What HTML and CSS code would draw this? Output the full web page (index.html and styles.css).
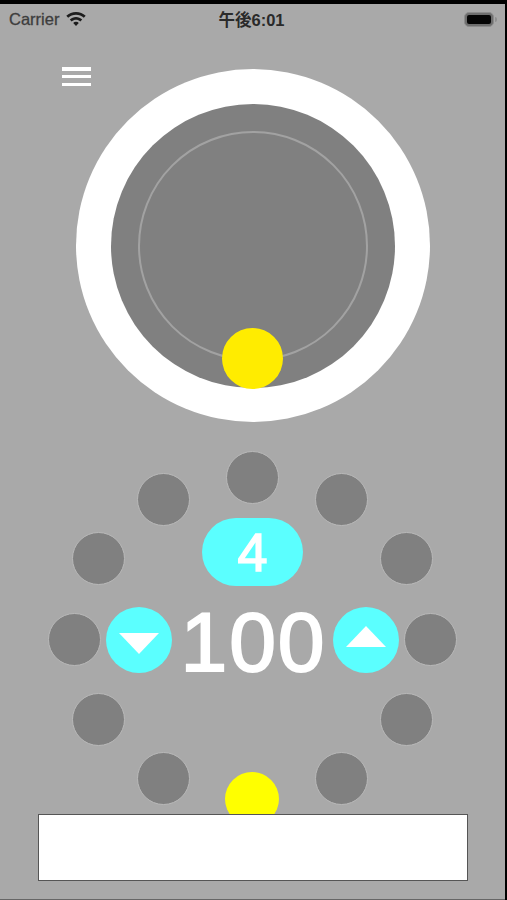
FILE: index.html
```html
<!DOCTYPE html>
<html lang="ja">
<head>
<meta charset="utf-8">
<title>Metronome</title>
<link rel="stylesheet" href="styles.css">
</head>
<body>
<div class="screen">
  <header class="status">
    <div class="status-left">
      <span class="carrier">Carrier</span>
      <svg class="wifi" viewBox="0 0 20 14" aria-hidden="true"><path d="M10 0c3.700 0 7.100 1.400 9.700 3.800l-1.900 2C15.700 3.900 13 2.800 10 2.800S4.300 3.900 2.200 5.800l-1.900-2C2.900 1.400 6.300 0 10 0z"/><path d="M10 5c2.400 0 4.500.9 6.200 2.400l-1.900 2C13.100 8.400 11.600 7.800 10 7.800s-3.100.6-4.300 1.600l-1.900-2C5.500 5.900 7.600 5 10 5z"/><path d="M10 9.800c1.100 0 2.100.4 2.800 1.100L10 14l-2.800-3.100c.7-.7 1.700-1.100 2.800-1.100z"/></svg>
    </div>
    <span class="clock">午後6:01</span>
    <div class="battery"><span class="battery-fill"></span></div>
  </header>
  <button class="menu" aria-label="menu"><span></span><span></span><span></span></button>
  <section class="dial">
    <div class="dial-inner"><div class="dial-ring"></div></div>
    <div class="dial-knob"></div>
  </section>
  <section class="beats">
    <span class="dot d1"></span><span class="dot d2"></span><span class="dot d3"></span>
    <span class="dot d4"></span><span class="dot d5"></span><span class="dot d6"></span>
    <span class="dot d7"></span><span class="dot d8"></span><span class="dot d9"></span>
    <span class="dot d10"></span><span class="dot d11"></span><span class="dot active d12"></span>
    <div class="controls">
      <div class="count">4</div>
      <div class="tempo">
        <button class="step" aria-label="down"><svg class="tri-down" viewBox="0 0 40 21"><path d="M0 0H40L20 21Z"/></svg></button>
        <span class="bpm">100</span>
        <button class="step" aria-label="up"><svg class="tri-up" viewBox="0 0 40 21"><path d="M0 21H40L20 0Z"/></svg></button>
      </div>
    </div>
  </section>
  <div class="ad"></div>
</div>
</body>
</html>
```
FILE: styles.css
```css
html, body { margin: 0; padding: 0; background: #000; }
body { width: 507px; height: 900px; overflow: hidden; font-family: "Liberation Sans", Arial, sans-serif; }
.screen { position: relative; box-sizing: border-box; height: 896px; margin: 4px 2px 0 0; background: #a9a9a9; border-bottom: 1px solid #666; display: flex; flex-direction: column; align-items: center; overflow: hidden; }
.status { align-self: stretch; height: 30px; box-sizing: border-box; padding: 0 11px 0 9px; display: grid; grid-template-columns: 1fr auto 1fr; align-items: center; }
.status-left { display: flex; align-items: center; gap: 7px; }
.carrier { color: #3d3d3d; font-size: 16.500px; -webkit-text-stroke: 0.300px #3d3d3d; }
.wifi { width: 20px; height: 14px; fill: #1c1c1c; }
.clock { font-family: "Liberation Sans", "Noto Sans CJK JP", sans-serif; font-weight: 700; font-size: 16.500px; color: #2a2a2a; }
.battery { position: relative; justify-self: end; width: 30px; height: 15px; box-sizing: border-box; border: 1px solid #8c8c8c; border-radius: 5px; padding: 2px; background: #6e6e6e; }
.battery::after { content: ""; position: absolute; right: -4px; top: 4px; width: 2px; height: 5px; background: #8f8f8f; border-radius: 0 2px 2px 0; }
.battery-fill { display: block; height: 100%; background: #050505; border-radius: 2px; }
.menu { position: absolute; left: 62px; top: 63px; width: 29px; height: 19px; padding: 0; border: 0; background: none; display: flex; flex-direction: column; justify-content: space-between; }
.menu span { display: block; height: 3.500px; background: #fff; }
.dial { position: relative; flex: none; margin-top: 35px; width: 354px; height: 353px; border-radius: 50%; background: #fff; display: flex; align-items: center; justify-content: center; }
.dial-inner { width: 284px; height: 284px; border-radius: 50%; background: #808080; display: flex; align-items: center; justify-content: center; }
.dial-ring { width: 226px; height: 226px; border-radius: 50%; border: 2px solid #a2a2a2; }
.dial-knob { position: absolute; left: 146px; top: 259px; width: 61px; height: 61px; border-radius: 50%; background: #ffec00; }
.beats { position: relative; flex: none; margin-top: 29px; margin-left: 1px; width: 412px; height: 364px; }
.dot { position: absolute; width: 51px; height: 51px; border-radius: 50%; background: #808080; border: 1px solid #b9b9b9; }
.d1 { left: 179px; top: 0; }
.d2 { left: 268px; top: 22px; }
.d3 { left: 333px; top: 81px; }
.d4 { left: 357px; top: 162px; }
.d5 { left: 333px; top: 242px; }
.d6 { left: 268px; top: 301px; }
.d7 { left: 90px; top: 301px; }
.d8 { left: 25px; top: 242px; }
.d9 { left: 1px; top: 162px; }
.d10 { left: 25px; top: 81px; }
.d11 { left: 90px; top: 22px; }
.active { left: 178px; top: 321px; width: 54px; height: 54px; background: #ffff00; border: 0; }
.controls { position: absolute; left: 59px; top: 67px; width: 293px; display: flex; flex-direction: column; align-items: center; gap: 21px; }
.count { width: 101px; height: 68px; border-radius: 34px; background: #5bffff; color: #fff; font-size: 54px; line-height: 68px; text-align: center; -webkit-text-stroke: 1.500px #fff; }
.tempo { align-self: stretch; display: flex; align-items: center; justify-content: space-between; }
.step { width: 66px; height: 66px; padding: 0; border: 0; border-radius: 50%; background: #5bffff; display: flex; align-items: center; justify-content: center; }
.step svg { width: 40px; height: 21px; fill: #fff; }
.tri-down { margin-top: 7px; }
.tri-up { margin-bottom: 8px; }
.bpm { color: #fff; font-size: 84px; height: 66px; line-height: 71px; letter-spacing: 2px; margin-right: -2px; -webkit-text-stroke: 2px #fff; }
.ad { position: absolute; left: 37.500px; top: 810px; box-sizing: border-box; width: 430px; height: 67px; background: #fff; border: 1.500px solid #555; }
```
